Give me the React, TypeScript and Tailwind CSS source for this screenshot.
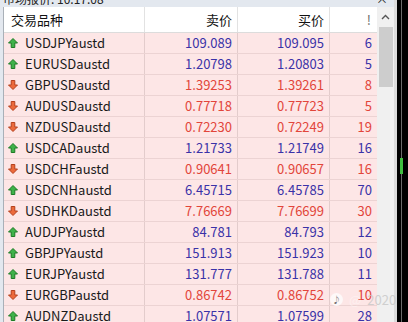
import React from "react";

type Row = { sym: string; bid: string; ask: string; spread: string; up: boolean };

const rows: Row[] = [
  { sym: "USDJPYaustd", bid: "109.089", ask: "109.095", spread: "6", up: true },
  { sym: "EURUSDaustd", bid: "1.20798", ask: "1.20803", spread: "5", up: true },
  { sym: "GBPUSDaustd", bid: "1.39253", ask: "1.39261", spread: "8", up: false },
  { sym: "AUDUSDaustd", bid: "0.77718", ask: "0.77723", spread: "5", up: false },
  { sym: "NZDUSDaustd", bid: "0.72230", ask: "0.72249", spread: "19", up: false },
  { sym: "USDCADaustd", bid: "1.21733", ask: "1.21749", spread: "16", up: true },
  { sym: "USDCHFaustd", bid: "0.90641", ask: "0.90657", spread: "16", up: false },
  { sym: "USDCNHaustd", bid: "6.45715", ask: "6.45785", spread: "70", up: true },
  { sym: "USDHKDaustd", bid: "7.76669", ask: "7.76699", spread: "30", up: false },
  { sym: "AUDJPYaustd", bid: "84.781", ask: "84.793", spread: "12", up: true },
  { sym: "GBPJPYaustd", bid: "151.913", ask: "151.923", spread: "10", up: true },
  { sym: "EURJPYaustd", bid: "131.777", ask: "131.788", spread: "11", up: true },
  { sym: "EURGBPaustd", bid: "0.86742", ask: "0.86752", spread: "10", up: false },
  { sym: "AUDNZDaustd", bid: "1.07571", ask: "1.07599", spread: "28", up: true },
];

function UpIcon() {
  return (
    <svg width="10" height="10" viewBox="0 0 10 10">
      <polygon points="5,0.5 9.5,5 6.8,5 6.8,9.5 3.2,9.5 3.2,5 0.5,5" fill="#3fb24a" stroke="#1d7a25" strokeWidth="1" strokeLinejoin="round" />
    </svg>
  );
}

function DownIcon() {
  return (
    <svg width="10" height="10" viewBox="0 0 10 10">
      <polygon points="5,9.5 9.5,5 6.8,5 6.8,0.5 3.2,0.5 3.2,5 0.5,5" fill="#ec6a3c" stroke="#b4401c" strokeWidth="1" strokeLinejoin="round" />
    </svg>
  );
}

export default function App() {
  const font = { fontFamily: '"Noto Sans CJK SC", "Noto Sans", sans-serif' };
  return (
    <div className="w-[408px] h-[322px] overflow-hidden flex bg-black relative" style={font}>
      <div className="w-[394px] flex flex-col bg-[#e3e8ef]">
        <div className="h-[7px] shrink-0 overflow-hidden flex justify-between pl-[3px] pr-[6px]">
          <div className="-mt-[9px] text-[12px] leading-[16px] text-[#222]">市场报价: 10:17:08</div>
          <div className="-mt-[9px] text-[12px] leading-[16px] text-[#222]">×</div>
        </div>
        <div className="flex flex-1 min-h-0 pl-[3px]">
          <div className="flex flex-col w-[374px] border-l border-[#a9b0b8] bg-[#fde6e6]">
            <div className="flex h-[26px] shrink-0 bg-white border-b border-[#dcdcdc] text-[13px] text-[#111]">
              <div className="w-[141px] border-r border-[#e2e2e2] flex items-center pl-[7px]">交易品种</div>
              <div className="w-[93px] border-r border-[#e2e2e2] flex items-center justify-end pr-[5px]">卖价</div>
              <div className="w-[92px] border-r border-[#e2e2e2] flex items-center justify-end pr-[5px]">买价</div>
              <div className="w-[47px] flex items-center justify-end pr-[6px] text-[#666]">!</div>
            </div>
            {rows.map((r) => {
              const c = r.up ? "text-[#3a32a8]" : "text-[#e2453a]";
              return (
                <div key={r.sym} className="flex h-[21px] shrink-0 border-b border-[#ecd3d3] text-[13px]">
                  <div className="w-[141px] border-r border-[#e3cccc] flex items-center pl-[4px] gap-[7px] text-[#1a1a1a]">
                    {r.up ? <UpIcon /> : <DownIcon />}
                    <span>{r.sym}</span>
                  </div>
                  <div className={`w-[93px] border-r border-[#e3cccc] flex items-center justify-end pr-[5px] ${c}`}>{r.bid}</div>
                  <div className={`w-[92px] border-r border-[#e3cccc] flex items-center justify-end pr-[5px] ${c}`}>{r.ask}</div>
                  <div className={`w-[47px] flex items-center justify-end pr-[5px] ${c}`}>{r.spread}</div>
                </div>
              );
            })}
          </div>
          <div className="w-[17px] bg-[#f0f0f0] flex flex-col items-center">
            <div className="h-[20px] flex items-center justify-center">
              <svg width="9" height="6" viewBox="0 0 9 6">
                <polyline points="1,5 4.5,1.5 8,5" fill="none" stroke="#555" strokeWidth="1.4" />
              </svg>
            </div>
            <div className="w-[14px] h-[60px] bg-[#cdcdcd]" />
          </div>
        </div>
      </div>
      <div className="flex-1 flex">
        <div className="w-[3px] bg-[#dcdcdc]" />
        <div className="w-[4px]" />
        <div className="w-px bg-[#6b6b6b]" />
      </div>
      <div className="absolute left-[330px] top-[290px] flex items-center gap-[6px] text-[13px] text-white opacity-80">
        <div className="w-[13px] h-[13px] rounded-full bg-white/90 flex items-center justify-center text-[9px] text-[#555]">♪</div>
        <span className="opacity-50">@</span>
        <span className="text-[#c8c8c8]">2020</span>
      </div>
      <div className="absolute left-[400px] top-[158px] w-[3px] h-[16px] bg-[#3fbf3f]" />
    </div>
  );
}
